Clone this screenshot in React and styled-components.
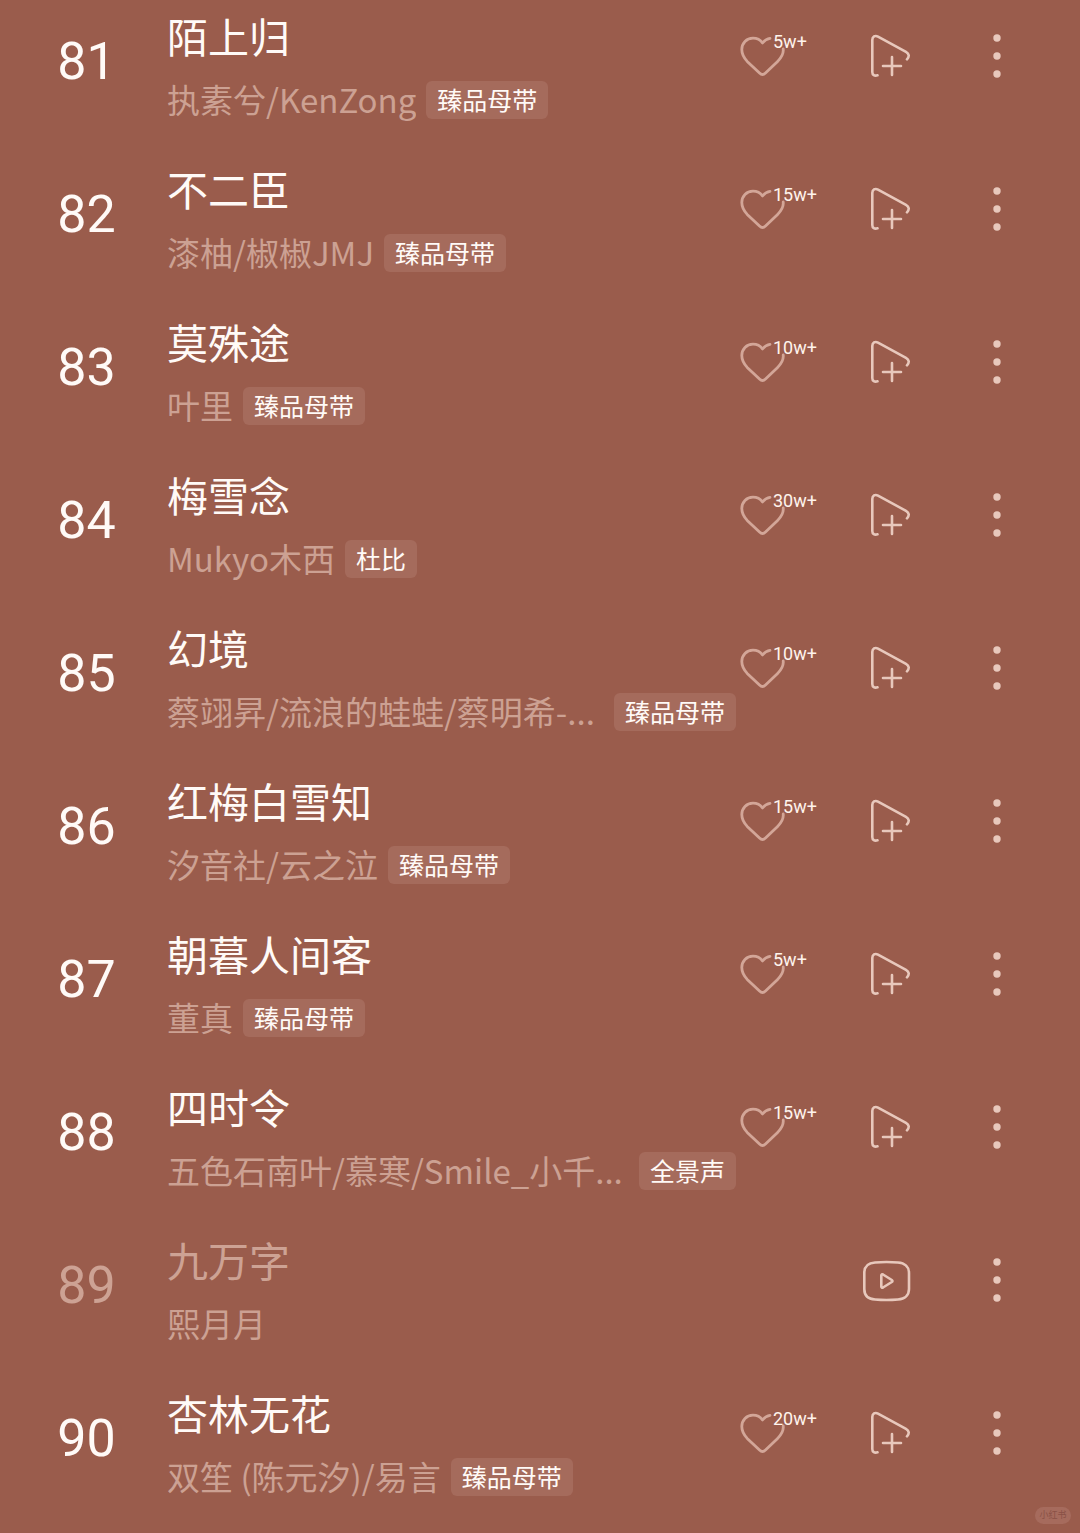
import styled, { createGlobalStyle } from "styled-components";

const songs = [
  { no: 81, title: "陌上归", artist: "执素兮/KenZong", tag: "臻品母带", likes: "5w+" },
  { no: 82, title: "不二臣", artist: "漆柚/椒椒JMJ", tag: "臻品母带", likes: "15w+" },
  { no: 83, title: "莫殊途", artist: "叶里", tag: "臻品母带", likes: "10w+" },
  { no: 84, title: "梅雪念", artist: "Mukyo木西", tag: "杜比", likes: "30w+" },
  { no: 85, title: "幻境", artist: "蔡翊昇/流浪的蛙蛙/蔡明希-...", tag: "臻品母带", likes: "10w+", long: true },
  { no: 86, title: "红梅白雪知", artist: "汐音社/云之泣", tag: "臻品母带", likes: "15w+" },
  { no: 87, title: "朝暮人间客", artist: "董真", tag: "臻品母带", likes: "5w+" },
  { no: 88, title: "四时令", artist: "五色石南叶/慕寒/Smile_小千...", tag: "全景声", likes: "15w+", long: true },
  { no: 89, title: "九万字", artist: "熙月月", video: true },
  { no: 90, title: "杏林无花", artist: "双笙 (陈元汐)/易言", tag: "臻品母带", likes: "20w+" },
];

const HeartIcon = () => (
  <svg width="46" height="42" viewBox="0 0 46 42" fill="none" stroke="currentColor" strokeWidth="2.8" strokeLinecap="round" strokeLinejoin="round">
    <path d="M30 3.4C27 3.8 24.5 5.4 22.5 8C20.2 4.8 16.8 3.2 13 3.2C6.5 3.2 1.8 8 1.8 14.6C1.8 19.2 3.6 22.6 7.2 26.4L19.5 38C21.4 39.8 23.6 39.8 25.5 38L37.6 26.4C41.8 22.2 43.8 18.6 43.2 14" />
  </svg>
);

const PlayAddIcon = () => (
  <svg width="42" height="44" viewBox="0 0 42 44" fill="none" stroke="currentColor" strokeWidth="2.6" strokeLinecap="round" strokeLinejoin="round">
    <path d="M8.5 41.3C5.5 42.2 3.3 41 3.3 38V6C3.3 2.6 6 1 9 2.6L37 17.8C40.2 19.6 40.6 22.6 38 25.4" />
    <path d="M23 23V41M14 32H32" />
  </svg>
);

const VideoIcon = () => (
  <svg width="56" height="44" viewBox="0 0 56 44" fill="none" stroke="currentColor" strokeWidth="2.6" strokeLinejoin="round">
    <path d="M13 4.5C20 3.9 29 3.9 36 4.5C43 5 47 9 47 15V31C47 37 43 41 36 41.5C29 42.1 20 42.1 13 41.5C6 41 2.3 37 2.3 31V15C2.3 9 6 5 13 4.5Z" />
    <path d="M19.3 17.5C19.3 16.4 20.1 16 21 16.5L29.8 22C30.7 22.6 30.7 23.4 29.8 24L21 29.5C20.1 30 19.3 29.6 19.3 28.5Z" />
  </svg>
);

const MoreIcon = () => (
  <svg width="8" height="44" viewBox="0 0 8 44" fill="currentColor">
    <circle cx="4" cy="4" r="3.7" />
    <circle cx="4" cy="22" r="3.7" />
    <circle cx="4" cy="40" r="3.7" />
  </svg>
);

const Song = ({ song }) => (
  <Row>
    <Index $muted={song.video}>{song.no}</Index>
    <Info>
      <Title $muted={song.video}>{song.title}</Title>
      <Meta>
        <Artist $fill={song.long}>{song.artist}</Artist>
        {song.tag && <Tag>{song.tag}</Tag>}
      </Meta>
    </Info>
    <Actions>
      {song.likes && (
        <LikeButton aria-label={`喜欢 ${song.title}`}>
          <HeartIcon />
          <Count>{song.likes}</Count>
        </LikeButton>
      )}
      <IconButton $width={60} aria-label={song.video ? "播放视频" : "添加播放"}>
        {song.video ? <VideoIcon /> : <PlayAddIcon />}
      </IconButton>
      <IconButton $width={74} aria-label="更多">
        <MoreIcon />
      </IconButton>
    </Actions>
  </Row>
);

const App = () => {
  return (
    <>
      <GlobalStyle />
      <Wrapper>
        <List>
          {songs.map((song) => (
            <Song key={song.no} song={song} />
          ))}
        </List>
        <Watermark>小红书</Watermark>
      </Wrapper>
    </>
  );
};
export default App;

const GlobalStyle = createGlobalStyle`
  * {
    box-sizing: border-box;
  }

  body {
    margin: 0;
    background: #9a5c4c;
    font-family: Roboto, "Noto Sans CJK SC", sans-serif;
  }
`;

const Wrapper = styled.main`
  position: relative;
  min-height: 100vh;
  background: #9a5c4c;
`;

const List = styled.ol`
  margin: 0;
  padding: 0;
  list-style: none;
`;

const Row = styled.li`
  display: flex;
  align-items: flex-start;
  height: 153px;
  padding: 8px 46px 0;
`;

const Index = styled.span`
  flex: none;
  width: 81px;
  margin-right: 40px;
  padding-top: 22px;
  text-align: center;
  font-size: 52px;
  line-height: 64px;
  color: ${({ $muted }) => ($muted ? "#cda294" : "#fffaf7")};
`;

const Info = styled.div`
  flex: 1;
  min-width: 0;
`;

const Title = styled.h2`
  margin: 0;
  font-size: 41px;
  font-weight: 400;
  line-height: 62px;
  white-space: nowrap;
  color: ${({ $muted }) => ($muted ? "#cda294" : "#fffaf7")};
`;

const Meta = styled.div`
  display: flex;
  align-items: center;
  gap: 10px;
  height: 38px;
  margin-top: 11px;
`;

const Artist = styled.span`
  flex: ${({ $fill }) => ($fill ? "1 1 0" : "0 1 auto")};
  min-width: 0;
  padding-bottom: 3px;
  overflow: hidden;
  white-space: nowrap;
  font-family: "Noto Sans CJK SC", sans-serif;
  font-size: 33px;
  line-height: 48px;
  color: #cca193;
`;

const Tag = styled.span`
  flex: none;
  padding: 3px 11px 0;
  border-radius: 6px;
  background: #a56b5c;
  font-size: 25px;
  line-height: 35px;
  color: #fffaf7;
`;

const Actions = styled.div`
  display: flex;
  flex: none;
  gap: 40px;
  margin-left: 4px;
  padding-top: 18px;
`;

const IconButton = styled.button`
  display: flex;
  align-items: center;
  justify-content: center;
  width: ${({ $width }) => $width}px;
  height: 60px;
  padding: 0;
  border: 0;
  background: none;
  font-family: inherit;
  color: #e8c8bc;
  cursor: pointer;
`;

const LikeButton = styled(IconButton)`
  position: relative;
  justify-content: flex-start;
  width: 80px;
  color: #d3a698;
`;

const Count = styled.span`
  position: absolute;
  top: 4px;
  left: 33px;
  font-size: 18px;
  line-height: 24px;
  color: #fff3ec;
`;

const Watermark = styled.span`
  position: absolute;
  right: 9px;
  bottom: 9px;
  width: 36px;
  border-radius: 9px;
  background: #a66b5d;
  text-align: center;
  font-size: 9px;
  line-height: 17px;
  color: #8a5146;
`;
